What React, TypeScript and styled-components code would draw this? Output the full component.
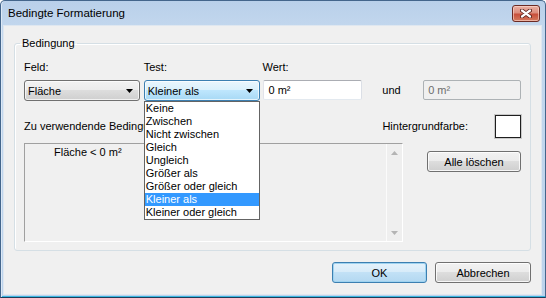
import React from 'react';
import styled, { createGlobalStyle } from 'styled-components';

const tests = [
  'Keine',
  'Zwischen',
  'Nicht zwischen',
  'Gleich',
  'Ungleich',
  'Größer als',
  'Größer oder gleich',
  'Kleiner als',
  'Kleiner oder gleich',
];

const Arrow = ({ color = '#000' }: { color?: string }) => (
  <svg width="7" height="4" viewBox="0 0 7 4">
    <polygon points="0,0 7,0 3.5,4" fill={color} />
  </svg>
);

const SmallArrow = ({ up }: { up?: boolean }) => (
  <svg width="7" height="4" viewBox="0 0 7 4">
    <polygon points={up ? '0,4 7,4 3.5,0' : '0,0 7,0 3.5,4'} fill="#b4b4b4" />
  </svg>
);

const App: React.FC = () => {
  return (
    <>
      <GlobalStyle />
      <Window>
        <TitleBar>
          <Title>Bedingte Formatierung</Title>
          <CloseButton>
            <svg width="12" height="9" viewBox="0 0 12 9">
              <path d="M2 1.5 L10 7.5 M10 1.5 L2 7.5" stroke="#5a1f18" strokeWidth="4" strokeLinecap="round" />
              <path d="M2 1.5 L10 7.5 M10 1.5 L2 7.5" stroke="#fff" strokeWidth="2.2" strokeLinecap="round" />
            </svg>
          </CloseButton>
        </TitleBar>
        <Content>
          <GroupBox>
            <Legend>Bedingung</Legend>
            <FieldRow>
              <FieldCol $w={116} $mr={4}>
                <Label>Feld:</Label>
                <Combo>
                  <span>Fläche</span>
                  <Arrow />
                </Combo>
              </FieldCol>
              <FieldCol $w={116} $mr={3}>
                <Label>Test:</Label>
                <Combo $open>
                  <span>Kleiner als</span>
                  <Arrow />
                </Combo>
                {/* open drop list, lies over the label below */}
                <DropList>
                  {tests.map((t) => (
                    <DropItem key={t} $selected={t === 'Kleiner als'}>
                      {t}
                    </DropItem>
                  ))}
                </DropList>
              </FieldCol>
              <FieldCol $w={100}>
                <Label>Wert:</Label>
                <TextBox>0 m²</TextBox>
              </FieldCol>
              <Und>und</Und>
              <TextBox $disabled $w={98}>0 m²</TextBox>
            </FieldRow>

            <MiddleRow>
              <Label>Zu verwendende Bedingungen:</Label>
              <ColorPick>
                <Label>Hintergrundfarbe:</Label>
                <Swatch />
              </ColorPick>
            </MiddleRow>

            <ListRow>
              <CondList>
                <CondItems>
                  <CondItem>Fläche &lt; 0 m²</CondItem>
                </CondItems>
                <ScrollBar>
                  <ScrollArrow>
                    <SmallArrow up />
                  </ScrollArrow>
                  <ScrollArrow>
                    <SmallArrow />
                  </ScrollArrow>
                </ScrollBar>
              </CondList>
              <Button $w={94} $mt={8}>Alle löschen</Button>
            </ListRow>
          </GroupBox>

          <ButtonRow>
            <Button $w={95} $default>OK</Button>
            <Button $w={96}>Abbrechen</Button>
          </ButtonRow>
        </Content>
      </Window>
    </>
  );
};

export default App;

const GlobalStyle = createGlobalStyle`
  html, body {
    margin: 0;
    padding: 0;
    background: #fff;
  }
  body {
    font-family: "Liberation Sans", Arial, sans-serif;
    font-size: 11px;
    color: #000;
  }
  * {
    box-sizing: border-box;
  }
`;

const Window = styled.div`
  width: 546px;
  height: 298px;
  display: flex;
  flex-direction: column;
  border: 1px solid #44668c;
  border-bottom-color: #1d3c5a;
  border-radius: 5px 5px 0 0;
  background: linear-gradient(#b9d0ea, #c4d8ee 30px, #bcd3ec);
  padding: 0 3px 2px 2px;
  box-shadow: inset 1px 0 0 #dde9f6, inset 0 -1px 0 #39b6e0;
`;

const TitleBar = styled.div`
  height: 24px;
  display: flex;
  justify-content: space-between;
  align-items: flex-start;
  padding-left: 5px;
`;

const Title = styled.div`
  font-size: 11.5px;
  line-height: 24px;
  color: #000;
`;

const CloseButton = styled.div`
  width: 28px;
  height: 17px;
  margin-top: 4px;
  margin-right: 2px;
  display: flex;
  align-items: center;
  justify-content: center;
  border: 1px solid #6b2a24;
  border-radius: 3px;
  background: linear-gradient(#eab0a4 0%, #dc8c7c 45%, #c84f3b 55%, #d47a5e 100%);
  box-shadow: inset 0 0 0 1px rgba(255, 220, 210, 0.6);
`;

const Content = styled.div`
  flex: 1;
  display: flex;
  flex-direction: column;
  background: #f0f0f0;
  padding: 0 11px;
  box-shadow: inset 0 0 0 1px #dfe7f0;
`;

const GroupBox = styled.fieldset`
  margin: 12px 0 0 0;
  padding: 0 9px 8px 9px;
  min-width: 0;
  border: 1px solid #d5dfe5;
  border-radius: 3px;
  box-shadow: inset 1px 1px 0 #fff;
  display: flex;
  flex-direction: column;
`;

const Legend = styled.legend`
  padding: 0 2px;
  margin-left: -4px;
  line-height: 13px;
  font-size: 11px;
`;

const Label = styled.span`
  line-height: 13px;
  white-space: nowrap;
`;

const FieldRow = styled.div`
  display: flex;
  align-items: flex-end;
  margin-top: 11px;
`;

const FieldCol = styled.div<{ $w: number; $mr?: number }>`
  position: relative;
  display: flex;
  flex-direction: column;
  gap: 6px;
  width: ${(p) => p.$w}px;
  margin-right: ${(p) => p.$mr ?? 0}px;
`;

const Combo = styled.div<{ $open?: boolean }>`
  height: 21px;
  display: flex;
  align-items: center;
  justify-content: space-between;
  padding: 0 6px 0 3px;
  border: 1px solid ${(p) => (p.$open ? '#3c7fb1' : '#707070')};
  border-radius: 3px;
  background: ${(p) =>
    p.$open
      ? 'linear-gradient(#eaf6fd 0%, #d9f0fc 50%, #bee6fd 50%, #a7d9f5 100%)'
      : 'linear-gradient(#f2f2f2 0%, #ebebeb 50%, #dddddd 50%, #cfcfcf 100%)'};
  box-shadow: inset 0 0 0 1px rgba(255, 255, 255, 0.7);
`;

const DropList = styled.div`
  position: absolute;
  top: 100%;
  left: 0;
  width: 116px;
  z-index: 5;
  background: #fff;
  border: 1px solid #646464;
  display: flex;
  flex-direction: column;
`;

const DropItem = styled.div<{ $selected?: boolean }>`
  height: 13px;
  line-height: 13px;
  padding-left: 1px;
  white-space: nowrap;
  background: ${(p) => (p.$selected ? '#3399ff' : 'transparent')};
  color: ${(p) => (p.$selected ? '#fff' : '#000')};
`;

const TextBox = styled.div<{ $disabled?: boolean; $w?: number }>`
  height: 20px;
  margin-bottom: 1px;
  ${(p) => (p.$w ? `width: ${p.$w}px;` : '')}
  display: flex;
  align-items: center;
  padding-left: ${(p) => (p.$disabled ? 4 : 5)}px;
  border: 1px solid;
  border-color: ${(p) =>
    p.$disabled ? '#adb2b5' : '#abadb3 #dbdfe6 #e3e9ef #e2e3ea'};
  border-radius: 2px;
  background: ${(p) => (p.$disabled ? '#f0f0f0' : '#fff')};
  color: ${(p) => (p.$disabled ? '#6d6d6d' : '#000')};
`;

const Und = styled.span`
  width: 41px;
  margin-left: 20px;
  line-height: 21px;
`;

const MiddleRow = styled.div`
  display: flex;
  align-items: center;
  justify-content: space-between;
  margin-top: 14px;
  height: 23px;
`;

const ColorPick = styled.div`
  display: flex;
  align-items: center;
  gap: 27px;
`;

const Swatch = styled.div`
  width: 26px;
  height: 23px;
  background: #fff;
  border: 1px solid #1e1e1e;
  box-shadow: 0 0 0 1px #c8c8c8;
`;

const ListRow = styled.div`
  display: flex;
  justify-content: space-between;
  align-items: flex-start;
  margin-top: 5px;
`;

const CondList = styled.div`
  width: 379px;
  height: 99px;
  display: flex;
  border: 1px solid;
  border-color: #a0a0a0 #fff #fff #a0a0a0;
  background: #f0f0f0;
`;

const CondItems = styled.div`
  flex: 1;
  padding: 2px 0 0 29px;
`;

const CondItem = styled.div`
  line-height: 13px;
`;

const ScrollBar = styled.div`
  width: 16px;
  display: flex;
  flex-direction: column;
  justify-content: space-between;
  border-left: 1px solid #fbfbfb;
  background: #efefef;
`;

const ScrollArrow = styled.div`
  height: 17px;
  display: flex;
  align-items: center;
  justify-content: center;
`;

const Button = styled.div<{ $w: number; $mt?: number; $default?: boolean }>`
  width: ${(p) => p.$w}px;
  height: 21px;
  margin-top: ${(p) => p.$mt ?? 0}px;
  display: flex;
  align-items: center;
  justify-content: center;
  border: 1px solid ${(p) => (p.$default ? '#3c7fb1' : '#707070')};
  border-radius: 3px;
  background: ${(p) =>
    p.$default
      ? 'linear-gradient(#e5f2fb 0%, #d6ebf9 50%, #c2e1f6 50%, #b3d8f1 100%)'
      : 'linear-gradient(#f2f2f2 0%, #ebebeb 50%, #dddddd 50%, #cfcfcf 100%)'};
  box-shadow: ${(p) =>
    p.$default ? 'inset 0 0 0 1px #9fd3f0' : 'inset 0 0 0 1px rgba(255, 255, 255, 0.8)'};
`;

const ButtonRow = styled.div`
  display: flex;
  justify-content: flex-end;
  gap: 8px;
  margin-top: 11px;
`;
